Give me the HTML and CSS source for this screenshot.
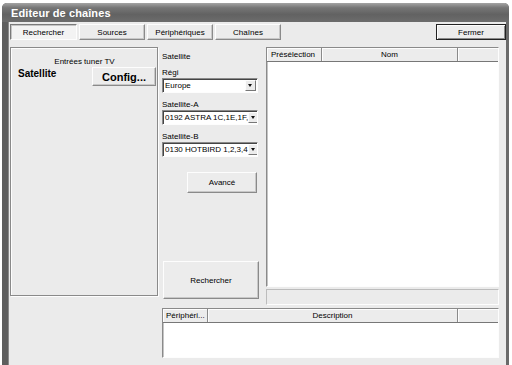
FILE: index.html
```html
<!DOCTYPE html>
<html>
<head>
    <link rel="stylesheet" href="styles.css">
</head>
<body>
    <div class="window">
        <div class="titlebar">Editeur de chaînes</div>
        <div class="content">
            <div class="toolbar">
                <div class="tabs">
                    <button class="tab active">Rechercher</button>
                    <button class="tab">Sources</button>
                    <button class="tab">Périphériques</button>
                    <button class="tab">Chaînes</button>
                </div>
                <button class="btn close-btn">Fermer</button>
            </div>
            <div class="main">
                <div class="tuner-panel">
                    <div class="panel-title">Entrées tuner TV</div>
                    <div class="tuner-row">
                        <span class="tuner-name">Satellite</span>
                        <button class="btn config-btn">Config...</button>
                    </div>
                </div>
                <div class="settings">
                    <div class="group-label">Satellite</div>
                    <div class="field">
                        <div class="field-label">Régi</div>
                        <div class="select"><span class="select-value">Europe</span><span class="arrow"></span></div>
                    </div>
                    <div class="field">
                        <div class="field-label">Satellite-A</div>
                        <div class="select"><span class="select-value">0192 ASTRA 1C,1E,1F,</span><span class="arrow"></span></div>
                    </div>
                    <div class="field">
                        <div class="field-label">Satellite-B</div>
                        <div class="select"><span class="select-value">0130 HOTBIRD 1,2,3,4</span><span class="arrow"></span></div>
                    </div>
                    <button class="btn advanced-btn">Avancé</button>
                    <button class="btn search-btn">Rechercher</button>
                </div>
                <div class="channels">
                    <div class="list channel-list">
                        <div class="list-header">
                            <div class="col col-preset">Présélection</div>
                            <div class="col col-name">Nom</div>
                            <div class="col col-rest"></div>
                        </div>
                    </div>
                    <div class="status-bar"></div>
                </div>
                <div class="list device-list">
                    <div class="list-header">
                        <div class="col col-device">Périphéri...</div>
                        <div class="col col-desc">Description</div>
                        <div class="col col-rest"></div>
                    </div>
                </div>
            </div>
        </div>
    </div>
</body>
</html>
```

FILE: styles.css
```css
body {
    margin: 0;
    background-color: white;
    font-family: "Liberation Sans", Arial, sans-serif;
    font-size: 8px;
    color: #000;
}

.window {
    margin: 3px 3px 0 2px;
    height: 370px;
    border-left: 6px solid #5e5e5e;
    border-right: 3px solid #6a6a6a;
    border-radius: 5px 5px 0 0;
    background-color: #ebebeb;
    box-shadow: inset 1px 0 0 #8a8a8a;
}

.titlebar {
    height: 19px;
    margin-left: -6px;
    margin-right: -3px;
    padding-left: 9px;
    border-radius: 5px 5px 0 0;
    background: linear-gradient(#a4a4a4, #767676 25%, #626262 60%, #6c6c6c);
    color: white;
    font-size: 11px;
    font-weight: bold;
    line-height: 21px;
    letter-spacing: 0.1px;
}

.content {
    padding: 2px 0 0 2px;
}

.toolbar {
    display: flex;
    justify-content: space-between;
    height: 16px;
}

.tabs {
    display: flex;
    gap: 2px;
}

button {
    font-family: "Liberation Sans", Arial, sans-serif;
    font-size: 8px;
    color: #000;
    padding: 0;
    margin: 0;
}

.btn, .tab {
    background-color: #ececec;
    border: 1px solid;
    border-color: #fdfdfd #8a8a8a #8a8a8a #fdfdfd;
    box-shadow: inset -1px -1px 0 #c8c8c8;
}

.tab {
    width: 66px;
    height: 16px;
}

.tab.active {
    width: 67px;
    background-color: #f3f3f3;
    border-color: #7a7a7a #fdfdfd #fdfdfd #7a7a7a;
    box-shadow: inset 1px 1px 0 #c4c4c4;
}

.close-btn {
    width: 70px;
    height: 16px;
    border: 1px solid #222;
    box-shadow: inset 1px 1px 0 #fdfdfd, inset -1px -1px 0 #8a8a8a;
}

.main {
    display: grid;
    grid-template-columns: 148px 100px 233px;
    grid-template-rows: 258px 50px;
    column-gap: 4px;
    row-gap: 3px;
    margin-top: 7px;
}

.tuner-panel {
    border: 1px solid #8a8a8a;
    box-shadow: inset 1px 1px 0 #fdfdfd, 1px 1px 0 #fdfdfd;
    height: 247px;
    padding: 0 1px 0 6px;
}

.panel-title {
    text-align: center;
    margin-top: 9px;
    padding-right: 4px;
}

.tuner-row {
    display: flex;
    justify-content: space-between;
    align-items: flex-start;
    margin-top: 1px;
}

.tuner-name {
    font-size: 10px;
    font-weight: bold;
    margin-top: 1px;
    margin-left: 1px;
}

.config-btn {
    width: 64px;
    height: 19px;
    font-size: 11px;
    font-weight: bold;
}

.settings {
    display: flex;
    flex-direction: column;
}

.group-label {
    margin-top: 5px;
}

.field {
    margin-top: 7px;
}

.select {
    display: flex;
    align-items: center;
    justify-content: space-between;
    width: 92px;
    height: 13px;
    margin-top: 1px;
    background-color: white;
    border: 1px solid;
    border-color: #8a8a8a #fdfdfd #fdfdfd #8a8a8a;
    box-shadow: inset 1px 1px 0 #444;
    padding-left: 2px;
    white-space: nowrap;
    overflow: hidden;
}

.arrow {
    flex: none;
    width: 11px;
    height: 11px;
    margin-right: 1px;
    background-color: #ececec;
    border: 1px solid;
    border-color: #fdfdfd #777 #777 #fdfdfd;
    box-sizing: border-box;
    position: relative;
}

.arrow::after {
    content: "";
    position: absolute;
    left: 2px;
    top: 3px;
    border-left: 2.5px solid transparent;
    border-right: 2.5px solid transparent;
    border-top: 3px solid #111;
}

.advanced-btn {
    align-self: flex-start;
    width: 70px;
    height: 21px;
    margin: 15px 0 0 25px;
}

.search-btn {
    width: 96px;
    height: 38px;
    margin-top: auto;
    margin-bottom: 6px;
    margin-left: 1px;
}

.channels {
    display: flex;
    flex-direction: column;
    gap: 2px;
}

.list {
    background-color: white;
    border: 1px solid;
    border-color: #8a8a8a #fdfdfd #fdfdfd #8a8a8a;
    box-shadow: inset 1px 1px 0 #c4c4c4;
}

.channel-list {
    flex: 1;
}

.status-bar {
    height: 14px;
    border: 1px solid;
    border-color: #bcbcbc #fdfdfd #fdfdfd #bcbcbc;
}

.list-header {
    display: flex;
    height: 13px;
    border-bottom: 1px solid #777;
    background-color: #ececec;
}

.col {
    border-right: 1px solid #8a8a8a;
    box-shadow: inset 1px 1px 0 #fdfdfd;
    line-height: 13px;
    text-align: center;
}

.col-preset {
    width: 55px;
    text-align: left;
    padding-left: 4px;
    box-sizing: border-box;
}

.col-name {
    width: 135px;
}

.col-rest {
    flex: 1;
    border-right: none;
}

.device-list {
    grid-column: 2 / 4;
    grid-row: 2;
}

.col-device {
    width: 45px;
    text-align: left;
    padding-left: 3px;
    box-sizing: border-box;
}

.col-desc {
    width: 249px;
}
```
